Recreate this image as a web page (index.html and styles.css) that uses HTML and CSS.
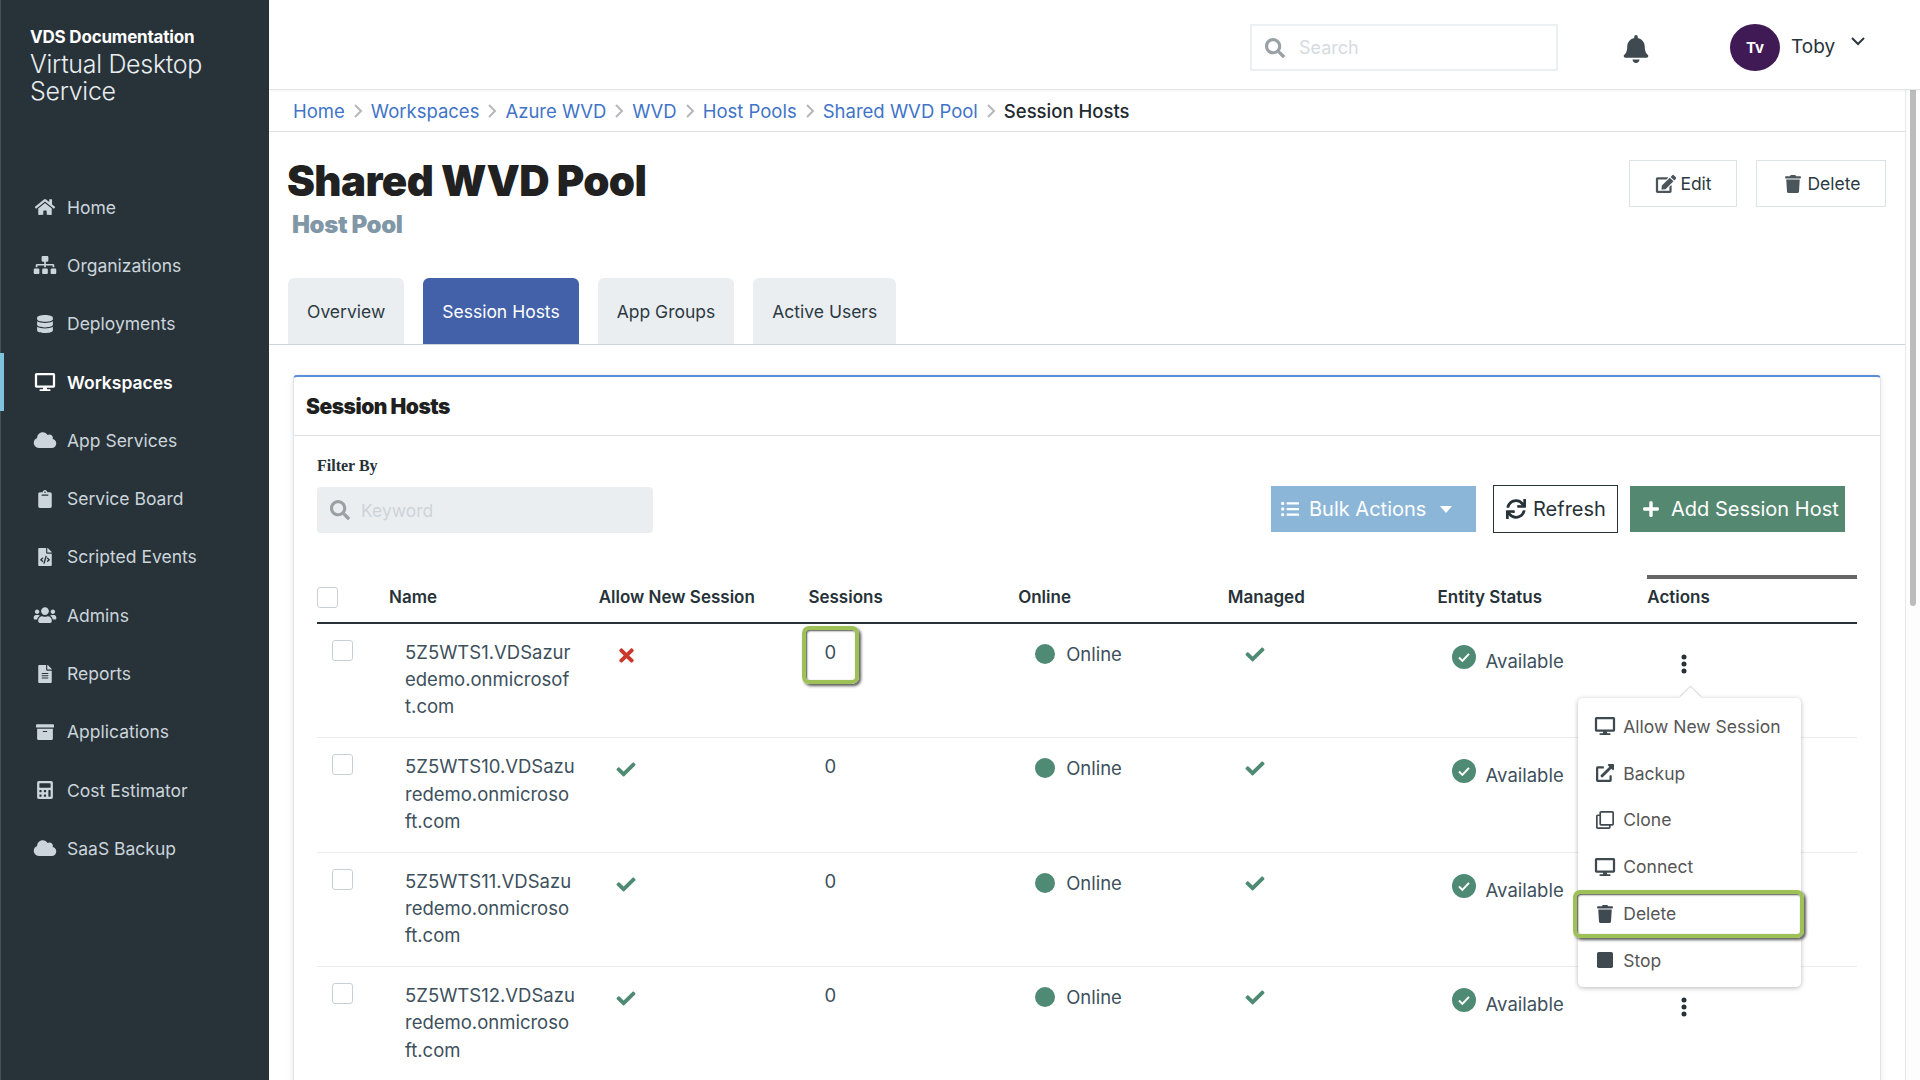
FILE: index.html
```html
<!DOCTYPE html>
<html lang="en">
<head>
<meta charset="utf-8">
<title>Session Hosts</title>
<link rel="stylesheet" href="styles.css">
</head>
<body>
<svg class="sprite" aria-hidden="true">
  <symbol id="i-home" viewBox="0 0 576 512"><path d="M280.37 148.26L96 300.11V464a16 16 0 0 0 16 16l112.06-.29a16 16 0 0 0 15.92-16V368a16 16 0 0 1 16-16h64a16 16 0 0 1 16 16v95.64a16 16 0 0 0 16 16.05L464 480a16 16 0 0 0 16-16V300L295.67 148.26a12.19 12.19 0 0 0-15.3 0zM571.6 251.47L488 182.56V44.05a12 12 0 0 0-12-12h-56a12 12 0 0 0-12 12v72.61L318.47 43a48 48 0 0 0-61 0L4.34 251.47a12 12 0 0 0-1.6 16.9l25.5 31A12 12 0 0 0 45.15 301l235.22-193.74a12.19 12.19 0 0 1 15.3 0L530.9 301a12 12 0 0 0 16.9-1.6l25.5-31a12 12 0 0 0-1.7-16.93z"/></symbol>
  <symbol id="i-sitemap" viewBox="0 0 640 512"><path d="M128 352H32c-17.67 0-32 14.33-32 32v96c0 17.67 14.33 32 32 32h96c17.67 0 32-14.33 32-32v-96c0-17.67-14.33-32-32-32zm-24-80h192v48h48v-48h192v48h48v-57.59c0-21.17-17.23-38.41-38.41-38.41H344v-64h40c17.67 0 32-14.33 32-32V32c0-17.67-14.33-32-32-32H256c-17.67 0-32 14.33-32 32v96c0 17.67 14.33 32 32 32h40v64H94.41C73.23 224 56 241.23 56 262.41V320h48v-48zm264 80h-96c-17.67 0-32 14.33-32 32v96c0 17.67 14.33 32 32 32h96c17.67 0 32-14.33 32-32v-96c0-17.67-14.33-32-32-32zm240 0h-96c-17.67 0-32 14.33-32 32v96c0 17.67 14.33 32 32 32h96c17.67 0 32-14.33 32-32v-96c0-17.67-14.33-32-32-32z"/></symbol>
  <symbol id="i-database" viewBox="0 0 448 512"><path d="M448 73.143v45.714C448 159.143 347.667 192 224 192S0 159.143 0 118.857V73.143C0 32.857 100.333 0 224 0s224 32.857 224 73.143zM448 176v102.857C448 319.143 347.667 352 224 352S0 319.143 0 278.857V176c48.125 33.143 136.208 48.572 224 48.572S399.874 209.143 448 176zm0 160v102.857C448 479.143 347.667 512 224 512S0 479.143 0 438.857V336c48.125 33.143 136.208 48.572 224 48.572S399.874 369.143 448 336z"/></symbol>
  <symbol id="i-desktop" viewBox="0 0 576 512"><path d="M528 0H48C21.5 0 0 21.5 0 48v320c0 26.5 21.5 48 48 48h192l-16 48h-72c-13.3 0-24 10.7-24 24s10.7 24 24 24h272c13.3 0 24-10.7 24-24s-10.7-24-24-24h-72l-16-48h192c26.5 0 48-21.5 48-48V48c0-26.5-21.5-48-48-48zm-16 352H64V64h448v288z"/></symbol>
  <symbol id="i-cloud" viewBox="0 0 640 512"><path d="M537.6 226.6c4.1-10.7 6.4-22.4 6.4-34.6 0-53-43-96-96-96-19.7 0-38.1 6-53.3 16.2C367 64.2 315.3 32 256 32c-88.4 0-160 71.6-160 160 0 2.7.1 5.4.2 8.1C40.2 219.8 0 273.2 0 336c0 79.5 64.5 144 144 144h368c70.7 0 128-57.3 128-128 0-61.9-44-113.6-102.4-125.4z"/></symbol>
  <symbol id="i-clipboard" viewBox="0 0 384 512"><path d="M384 112v352c0 26.51-21.49 48-48 48H48c-26.51 0-48-21.49-48-48V112c0-26.51 21.49-48 48-48h80c0-35.29 28.71-64 64-64s64 28.71 64 64h80c26.51 0 48 21.49 48 48zM192 40c-13.255 0-24 10.745-24 24s10.745 24 24 24 24-10.745 24-24-10.745-24-24-24m96 114v-20a6 6 0 0 0-6-6H102a6 6 0 0 0-6 6v20a6 6 0 0 0 6 6h180a6 6 0 0 0 6-6z"/></symbol>
  <symbol id="i-filecode" viewBox="0 0 384 512"><path d="M384 121.941V128H256V0h6.059c6.365 0 12.47 2.529 16.971 7.029l97.941 97.941A24.005 24.005 0 0 1 384 121.941zM248 160c-13.2 0-24-10.8-24-24V0H24C10.745 0 0 10.745 0 24v464c0 13.255 10.745 24 24 24h336c13.255 0 24-10.745 24-24V160H248zM123.206 400.505a5.4 5.4 0 0 1-7.633.246l-64.866-60.812a5.4 5.4 0 0 1 0-7.879l64.866-60.812a5.4 5.4 0 0 1 7.633.246l19.579 20.885a5.4 5.4 0 0 1-.372 7.747L101.65 336l40.763 35.874a5.4 5.4 0 0 1 .372 7.747l-19.579 20.884zm51.295 50.479l-27.453-7.97a5.402 5.402 0 0 1-3.681-6.692l61.44-211.626a5.402 5.402 0 0 1 6.692-3.681l27.452 7.97a5.4 5.4 0 0 1 3.68 6.692l-61.44 211.626a5.397 5.397 0 0 1-6.69 3.681zm160.792-111.045l-64.866 60.812a5.4 5.4 0 0 1-7.633-.246l-19.58-20.885a5.4 5.4 0 0 1 .372-7.747L284.35 336l-40.763-35.874a5.4 5.4 0 0 1-.372-7.747l19.58-20.885a5.4 5.4 0 0 1 7.633-.246l64.866 60.812a5.4 5.4 0 0 1-.001 7.879z"/></symbol>
  <symbol id="i-users" viewBox="0 0 640 512"><path d="M96 224c35.3 0 64-28.7 64-64s-28.7-64-64-64-64 28.7-64 64 28.7 64 64 64zm448 0c35.3 0 64-28.7 64-64s-28.7-64-64-64-64 28.7-64 64 28.7 64 64 64zm32 32h-64c-17.6 0-33.5 7.1-45.1 18.6 40.3 22.1 68.9 62 75.1 109.4h66c17.7 0 32-14.3 32-32v-32c0-35.3-28.7-64-64-64zm-256 0c61.9 0 112-50.1 112-112S381.9 32 320 32 208 82.1 208 144s50.1 112 112 112zm76.8 32h-8.3c-20.8 10-43.9 16-68.5 16s-47.6-6-68.5-16h-8.3C179.6 288 128 339.6 128 403.2V432c0 26.5 21.5 48 48 48h288c26.5 0 48-21.5 48-48v-28.8c0-63.6-51.6-115.2-115.2-115.2zm-223.7-13.4C161.5 263.1 145.6 256 128 256H64c-35.3 0-64 28.7-64 64v32c0 17.7 14.3 32 32 32h65.9c6.3-47.4 34.9-87.3 75.2-109.4z"/></symbol>
  <symbol id="i-filealt" viewBox="0 0 384 512"><path d="M224 136V0H24C10.7 0 0 10.7 0 24v464c0 13.3 10.7 24 24 24h336c13.3 0 24-10.7 24-24V160H248c-13.2 0-24-10.8-24-24zm64 236c0 6.6-5.4 12-12 12H108c-6.6 0-12-5.4-12-12v-8c0-6.6 5.4-12 12-12h168c6.6 0 12 5.4 12 12v8zm0-64c0 6.6-5.4 12-12 12H108c-6.6 0-12-5.4-12-12v-8c0-6.6 5.4-12 12-12h168c6.6 0 12 5.4 12 12v8zm0-72v8c0 6.6-5.4 12-12 12H108c-6.6 0-12-5.4-12-12v-8c0-6.6 5.4-12 12-12h168c6.6 0 12 5.4 12 12zm96-114.1v6.1H256V0h6.1c6.4 0 12.5 2.5 17 7l97.9 98c4.5 4.5 7 10.6 7 16.9z"/></symbol>
  <symbol id="i-archive" viewBox="0 0 512 512"><path d="M32 448c0 17.7 14.3 32 32 32h384c17.7 0 32-14.3 32-32V160H32v288zm160-212c0-6.6 5.4-12 12-12h104c6.6 0 12 5.4 12 12v8c0 6.6-5.4 12-12 12H204c-6.6 0-12-5.4-12-12v-8zM480 32H32C14.3 32 0 46.3 0 64v48c0 8.8 7.2 16 16 16h480c8.8 0 16-7.2 16-16V64c0-17.7-14.3-32-32-32z"/></symbol>
  <symbol id="i-calc" viewBox="0 0 448 512"><path d="M400 0H48C22.4 0 0 22.4 0 48v416c0 25.6 22.4 48 48 48h352c25.6 0 48-22.4 48-48V48c0-25.6-22.4-48-48-48zM128 435.2c0 6.4-6.4 12.8-12.8 12.8H76.8c-6.4 0-12.8-6.4-12.8-12.8v-38.4c0-6.4 6.4-12.8 12.8-12.8h38.4c6.4 0 12.8 6.4 12.8 12.8v38.4zm0-128c0 6.4-6.4 12.8-12.8 12.8H76.8c-6.4 0-12.8-6.4-12.8-12.8v-38.4c0-6.4 6.4-12.8 12.8-12.8h38.4c6.4 0 12.8 6.4 12.8 12.8v38.4zm128 128c0 6.4-6.4 12.8-12.8 12.8h-38.4c-6.4 0-12.8-6.4-12.8-12.8v-38.4c0-6.4 6.4-12.8 12.8-12.8h38.4c6.4 0 12.8 6.4 12.8 12.8v38.4zm0-128c0 6.4-6.4 12.8-12.8 12.8h-38.4c-6.4 0-12.8-6.4-12.8-12.8v-38.4c0-6.4 6.4-12.8 12.8-12.8h38.4c6.4 0 12.8 6.4 12.8 12.8v38.4zm128 128c0 6.4-6.4 12.8-12.8 12.8h-38.4c-6.4 0-12.8-6.4-12.8-12.8V268.8c0-6.4 6.4-12.8 12.8-12.8h38.4c6.4 0 12.8 6.4 12.8 12.8v166.4zm0-256c0 6.4-6.4 12.8-12.8 12.8H76.8c-6.4 0-12.8-6.4-12.8-12.8V76.8C64 70.4 70.4 64 76.8 64h294.4c6.4 0 12.8 6.4 12.8 12.8v102.4z"/></symbol>
  <symbol id="i-search" viewBox="0 0 512 512"><path d="M505 442.7L405.3 343c-4.5-4.5-10.6-7-17-7H372c27.6-35.3 44-79.7 44-128C416 93.1 322.9 0 208 0S0 93.1 0 208s93.1 208 208 208c48.3 0 92.7-16.4 128-44v16.3c0 6.4 2.5 12.5 7 17l99.7 99.7c9.4 9.4 24.6 9.4 33.9 0l28.3-28.3c9.4-9.4 9.4-24.6.1-34zM208 336c-70.7 0-128-57.2-128-128 0-70.7 57.2-128 128-128 70.7 0 128 57.2 128 128 0 70.7-57.2 128-128 128z"/></symbol>
  <symbol id="i-bell" viewBox="0 0 448 512"><path d="M224 512c35.32 0 63.97-28.65 63.97-64H160.03c0 35.35 28.65 64 63.97 64zm215.39-149.71c-19.32-20.76-55.47-51.99-55.47-154.29 0-77.7-54.48-139.9-127.94-155.16V32c0-17.67-14.32-32-31.98-32s-31.98 14.33-31.98 32v20.84C118.56 68.1 64.08 130.3 64.08 208c0 102.3-36.15 133.53-55.47 154.29-6 6.45-8.66 14.16-8.61 21.71.11 16.4 12.98 32 32.1 32h383.8c19.12 0 32-15.6 32.1-32 .05-7.55-2.61-15.27-8.61-21.71z"/></symbol>
  <symbol id="i-edit" viewBox="0 0 576 512"><path d="M402.6 83.2l90.2 90.2c3.8 3.8 3.8 10 0 13.8L274.4 405.6l-92.8 10.3c-12.4 1.4-22.9-9.1-21.5-21.5l10.3-92.8L388.8 83.2c3.8-3.8 10-3.8 13.8 0zm162-22.9l-48.8-48.8c-15.2-15.2-39.9-15.2-55.2 0l-35.4 35.4c-3.8 3.8-3.8 10 0 13.8l90.2 90.2c3.8 3.8 10 3.8 13.8 0l35.4-35.4c15.2-15.3 15.2-40 0-55.2zM384 346.2V448H64V128h229.8c3.2 0 6.2-1.3 8.5-3.5l40-40c7.6-7.6 2.2-20.5-8.5-20.5H48C21.5 64 0 85.5 0 112v352c0 26.5 21.5 48 48 48h352c26.5 0 48-21.5 48-48V306.2c0-10.7-12.9-16-20.5-8.5l-40 40c-2.2 2.3-3.5 5.3-3.5 8.5z"/></symbol>
  <symbol id="i-trash" viewBox="0 0 448 512"><path d="M432 32H312l-9.4-18.7A24 24 0 0 0 281.1 0H166.8a23.72 23.72 0 0 0-21.4 13.3L136 32H16A16 16 0 0 0 0 48v32a16 16 0 0 0 16 16h416a16 16 0 0 0 16-16V48a16 16 0 0 0-16-16zM53.2 467a48 48 0 0 0 47.9 45h245.8a48 48 0 0 0 47.9-45L416 128H32z"/></symbol>
  <symbol id="i-list" viewBox="0 0 512 512"><path d="M48 48a48 48 0 1 0 48 48 48 48 0 0 0-48-48zm0 160a48 48 0 1 0 48 48 48 48 0 0 0-48-48zm0 160a48 48 0 1 0 48 48 48 48 0 0 0-48-48zm448 16H176a16 16 0 0 0-16 16v32a16 16 0 0 0 16 16h320a16 16 0 0 0 16-16v-32a16 16 0 0 0-16-16zm0-320H176a16 16 0 0 0-16 16v32a16 16 0 0 0 16 16h320a16 16 0 0 0 16-16V80a16 16 0 0 0-16-16zm0 160H176a16 16 0 0 0-16 16v32a16 16 0 0 0 16 16h320a16 16 0 0 0 16-16v-32a16 16 0 0 0-16-16z"/></symbol>
  <symbol id="i-sync" viewBox="0 0 512 512"><path d="M440.65 12.57l4 82.77A247.16 247.16 0 0 0 255.83 8C134.73 8 33.91 94.92 12.29 209.82A12 12 0 0 0 24.09 224h49.05a12 12 0 0 0 11.67-9.26 175.91 175.91 0 0 1 317-56.94l-101.46-4.86a12 12 0 0 0-12.57 12v47.41a12 12 0 0 0 12 12H500a12 12 0 0 0 12-12V12a12 12 0 0 0-12-12h-47.37a12 12 0 0 0-11.98 12.57zM255.83 432a175.61 175.61 0 0 1-146-77.8l101.8 4.87a12 12 0 0 0 12.57-12v-47.4a12 12 0 0 0-12-12H12a12 12 0 0 0-12 12V500a12 12 0 0 0 12 12h47.35a12 12 0 0 0 12-12.6l-4.15-82.57A247.17 247.17 0 0 0 255.83 504c121.11 0 221.93-86.92 243.55-201.82a12 12 0 0 0-11.8-14.18h-49.05a12 12 0 0 0-11.67 9.26A175.86 175.86 0 0 1 255.83 432z"/></symbol>
  <symbol id="i-plus" viewBox="0 0 448 512"><path d="M416 208H272V64c0-17.67-14.33-32-32-32h-32c-17.67 0-32 14.33-32 32v144H32c-17.67 0-32 14.33-32 32v32c0 17.67 14.33 32 32 32h144v144c0 17.67 14.33 32 32 32h32c17.67 0 32-14.33 32-32V304h144c17.67 0 32-14.33 32-32v-32c0-17.67-14.33-32-32-32z"/></symbol>
  <symbol id="i-check" viewBox="0 0 512 512"><path d="M173.898 439.404l-166.4-166.4c-9.997-9.997-9.997-26.206 0-36.204l36.203-36.204c9.997-9.998 26.207-9.998 36.204 0L192 312.69 432.095 72.596c9.997-9.997 26.207-9.997 36.204 0l36.203 36.204c9.997 9.997 9.997 26.206 0 36.204l-294.4 294.401c-9.998 9.997-26.207 9.997-36.204-.001z"/></symbol>
  <symbol id="i-times" viewBox="0 0 352 512"><path d="M242.72 256l100.07-100.07c12.28-12.28 12.28-32.19 0-44.48l-22.24-22.24c-12.28-12.28-32.19-12.28-44.48 0L176 189.28 75.93 89.21c-12.28-12.28-32.19-12.28-44.48 0L9.21 111.45c-12.28 12.28-12.28 32.19 0 44.48L109.28 256 9.21 356.07c-12.28 12.28-12.28 32.19 0 44.48l22.24 22.24c12.28 12.28 32.2 12.28 44.48 0L176 322.72l100.07 100.07c12.28 12.28 32.2 12.28 44.48 0l22.24-22.24c12.28-12.28 12.28-32.19 0-44.48L242.72 256z"/></symbol>
  <symbol id="i-okcircle" viewBox="0 0 24 24"><circle cx="12" cy="12" r="12"/><path d="M7 12.5l3.4 3.4 6.6-7" fill="none" stroke="#fff" stroke-width="2"/></symbol>
  <symbol id="i-link" viewBox="0 0 512 512"><path d="M432 320H400a16 16 0 0 0-16 16V448H64V128H208a16 16 0 0 0 16-16V80a16 16 0 0 0-16-16H48A48 48 0 0 0 0 112V464a48 48 0 0 0 48 48H400a48 48 0 0 0 48-48V336A16 16 0 0 0 432 320ZM488 0h-128c-21.37 0-32.05 25.91-17 41l35.73 35.73L135 320.37a24 24 0 0 0 0 34L157.67 377a24 24 0 0 0 34 0L435.28 133.32 471 169c15 15 41 4.5 41-17V24A24 24 0 0 0 488 0Z"/></symbol>
  <symbol id="i-clone" viewBox="0 0 512 512"><path d="M464 0H144c-26.51 0-48 21.49-48 48v48H48c-26.51 0-48 21.49-48 48v320c0 26.51 21.49 48 48 48h320c26.51 0 48-21.49 48-48v-48h48c26.51 0 48-21.49 48-48V48c0-26.51-21.49-48-48-48zM362 464H54a6 6 0 0 1-6-6V150a6 6 0 0 1 6-6h42v224c0 26.51 21.49 48 48 48h224v42a6 6 0 0 1-6 6zm96-96H150a6 6 0 0 1-6-6V54a6 6 0 0 1 6-6h308a6 6 0 0 1 6 6v308a6 6 0 0 1-6 6z"/></symbol>
  <symbol id="i-stop" viewBox="0 0 448 448"><rect width="448" height="448" rx="48"/></symbol>
  <symbol id="i-kebab" viewBox="0 0 6 20"><circle cx="3" cy="3" r="2.5"/><circle cx="3" cy="10" r="2.5"/><circle cx="3" cy="17" r="2.5"/></symbol>
  <symbol id="i-chev" viewBox="0 0 10 16"><path d="M2 2l6 6-6 6" fill="none" stroke="currentColor" stroke-width="2"/></symbol>
</svg>

<div class="app">
  <aside class="sidebar">
    <div class="brand">
      <div class="brand-top">VDS Documentation</div>
      <div class="brand-name">Virtual Desktop Service</div>
    </div>
    <nav class="nav">
      <a class="nav-item"><span class="nav-icon"><svg class="ico18"><use href="#i-home"/></svg></span>Home</a>
      <a class="nav-item"><span class="nav-icon"><svg class="ico18"><use href="#i-sitemap"/></svg></span>Organizations</a>
      <a class="nav-item"><span class="nav-icon"><svg class="ico18"><use href="#i-database"/></svg></span>Deployments</a>
      <a class="nav-item active"><span class="nav-icon"><svg class="ico18"><use href="#i-desktop"/></svg></span>Workspaces</a>
      <a class="nav-item"><span class="nav-icon"><svg class="ico18"><use href="#i-cloud"/></svg></span>App Services</a>
      <a class="nav-item"><span class="nav-icon"><svg class="ico18"><use href="#i-clipboard"/></svg></span>Service Board</a>
      <a class="nav-item"><span class="nav-icon"><svg class="ico18"><use href="#i-filecode"/></svg></span>Scripted Events</a>
      <a class="nav-item"><span class="nav-icon"><svg class="ico18"><use href="#i-users"/></svg></span>Admins</a>
      <a class="nav-item"><span class="nav-icon"><svg class="ico18"><use href="#i-filealt"/></svg></span>Reports</a>
      <a class="nav-item"><span class="nav-icon"><svg class="ico18"><use href="#i-archive"/></svg></span>Applications</a>
      <a class="nav-item"><span class="nav-icon"><svg class="ico18"><use href="#i-calc"/></svg></span>Cost Estimator</a>
      <a class="nav-item"><span class="nav-icon"><svg class="ico18"><use href="#i-cloud"/></svg></span>SaaS Backup</a>
    </nav>
  </aside>

  <div class="main">
    <header class="topbar">
      <div class="top-search"><svg class="search-ico"><use href="#i-search"/></svg><span>Search</span></div>
      <svg class="bell"><use href="#i-bell"/></svg>
      <div class="avatar">Tv</div>
      <div class="user">Toby</div>
      <svg class="user-chev" viewBox="0 0 14 9"><path d="M1 1l6 6 6-6" fill="none" stroke="#2b3940" stroke-width="2"/></svg>
    </header>

    <div class="below">
      <div class="content">
        <div class="crumbs">
          <a>Home</a><svg class="crumb-sep"><use href="#i-chev"/></svg>
          <a>Workspaces</a><svg class="crumb-sep"><use href="#i-chev"/></svg>
          <a>Azure WVD</a><svg class="crumb-sep"><use href="#i-chev"/></svg>
          <a>WVD</a><svg class="crumb-sep"><use href="#i-chev"/></svg>
          <a>Host Pools</a><svg class="crumb-sep"><use href="#i-chev"/></svg>
          <a>Shared WVD Pool</a><svg class="crumb-sep"><use href="#i-chev"/></svg>
          <span class="crumb-current">Session Hosts</span>
        </div>

        <div class="page-head">
          <div>
            <h1 class="title">Shared WVD Pool</h1>
            <div class="subtitle">Host Pool</div>
          </div>
          <div class="head-actions">
            <button class="ghost-btn"><svg class="ico18"><use href="#i-edit"/></svg>Edit</button>
            <button class="ghost-btn delete-btn"><svg class="ico18"><use href="#i-trash"/></svg>Delete</button>
          </div>
        </div>

        <div class="tabs">
          <div class="tab">Overview</div>
          <div class="tab on">Session Hosts</div>
          <div class="tab">App Groups</div>
          <div class="tab">Active Users</div>
        </div>

        <section class="card">
          <div class="card-head">Session Hosts</div>
          <div class="card-body">
            <div class="filters">
              <div>
                <div class="filter-label">Filter By</div>
                <div class="keyword"><svg class="search-ico"><use href="#i-search"/></svg><span>Keyword</span></div>
              </div>
              <div class="toolbar">
                <button class="btn bulk"><svg class="ico18"><use href="#i-list"/></svg>Bulk Actions<span class="caret"></span></button>
                <button class="btn refresh"><svg class="ico20"><use href="#i-sync"/></svg>Refresh</button>
                <button class="btn add"><svg class="ico18"><use href="#i-plus"/></svg>Add Session Host</button>
              </div>
            </div>

            <div class="grid-row grid-head">
              <div><span class="cb head-cb"></span></div>
              <div>Name</div>
              <div>Allow New Session</div>
              <div>Sessions</div>
              <div>Online</div>
              <div>Managed</div>
              <div>Entity Status</div>
              <div class="actions-head">Actions</div>
            </div>

            <div class="grid-row host">
              <div><span class="cb"></span></div>
              <div class="name">5Z5WTS1.VDSazur<br>edemo.onmicrosof<br>t.com</div>
              <div class="allow"><svg class="x"><use href="#i-times"/></svg></div>
              <div class="sessions first"><span class="zero">0</span><span class="callout session-callout"></span></div>
              <div class="online"><span class="dot"></span>Online</div>
              <div class="managed"><svg class="ok"><use href="#i-check"/></svg></div>
              <div class="status"><svg class="ok-circle"><use href="#i-okcircle"/></svg><span>Available</span></div>
              <div class="kebab-cell">
                <svg class="kebab"><use href="#i-kebab"/></svg>
                <div class="menu">
                  <div class="menu-item"><span class="menu-ico"><svg class="ico18"><use href="#i-desktop"/></svg></span>Allow New Session</div>
                  <div class="menu-item"><span class="menu-ico"><svg class="ico18"><use href="#i-link"/></svg></span>Backup</div>
                  <div class="menu-item"><span class="menu-ico"><svg class="ico18"><use href="#i-clone"/></svg></span>Clone</div>
                  <div class="menu-item"><span class="menu-ico"><svg class="ico18"><use href="#i-desktop"/></svg></span>Connect</div>
                  <div class="menu-item"><span class="menu-ico"><svg class="ico18"><use href="#i-trash"/></svg></span>Delete<span class="callout menu-callout"></span></div>
                  <div class="menu-item"><span class="menu-ico"><svg class="ico16"><use href="#i-stop"/></svg></span>Stop</div>
                </div>
              </div>
            </div>

            <div class="grid-row host">
              <div><span class="cb"></span></div>
              <div class="name">5Z5WTS10.VDSazu<br>redemo.onmicroso<br>ft.com</div>
              <div class="allow"><svg class="ok"><use href="#i-check"/></svg></div>
              <div class="sessions"><span class="zero">0</span></div>
              <div class="online"><span class="dot"></span>Online</div>
              <div class="managed"><svg class="ok"><use href="#i-check"/></svg></div>
              <div class="status"><svg class="ok-circle"><use href="#i-okcircle"/></svg><span>Available</span></div>
              <div class="kebab-cell"></div>
            </div>

            <div class="grid-row host">
              <div><span class="cb"></span></div>
              <div class="name">5Z5WTS11.VDSazu<br>redemo.onmicroso<br>ft.com</div>
              <div class="allow"><svg class="ok"><use href="#i-check"/></svg></div>
              <div class="sessions"><span class="zero">0</span></div>
              <div class="online"><span class="dot"></span>Online</div>
              <div class="managed"><svg class="ok"><use href="#i-check"/></svg></div>
              <div class="status"><svg class="ok-circle"><use href="#i-okcircle"/></svg><span>Available</span></div>
              <div class="kebab-cell"></div>
            </div>

            <div class="grid-row host">
              <div><span class="cb"></span></div>
              <div class="name">5Z5WTS12.VDSazu<br>redemo.onmicroso<br>ft.com</div>
              <div class="allow"><svg class="ok"><use href="#i-check"/></svg></div>
              <div class="sessions"><span class="zero">0</span></div>
              <div class="online"><span class="dot"></span>Online</div>
              <div class="managed"><svg class="ok"><use href="#i-check"/></svg></div>
              <div class="status"><svg class="ok-circle"><use href="#i-okcircle"/></svg><span>Available</span></div>
              <div class="kebab-cell"><svg class="kebab"><use href="#i-kebab"/></svg></div>
            </div>
          </div>
        </section>
      </div>
      <div class="scroll-track"><div class="scroll-thumb"></div></div>
    </div>
  </div>
</div>
</body>
</html>
```

FILE: styles.css
```css
* { box-sizing: border-box; }
html, body { margin: 0; height: 100%; overflow: hidden; }
body { font-family: Inter, "Noto Sans", sans-serif; color: #263238; background: #fff; }
.sprite { position: absolute; width: 0; height: 0; }
svg { fill: currentColor; flex: none; display: block; }
button { font: inherit; cursor: pointer; }
.ico18 { width: 24px; height: 18px; }
.ico20 { width: 20px; height: 20px; }
.ico16 { width: 16px; height: 16px; }

.app { display: flex; height: 1080px; }

.sidebar { width: 269px; flex: none; background: #283239; color: #cbd5db; border-left: 1px solid #46525a; }
.brand { padding: 27px 0 0 29px; height: 178px; }
.brand-top { font-size: 17px; font-weight: 700; color: #fff; line-height: 21px; letter-spacing: -.2px; }
.brand-name { font-size: 25px; line-height: 27px; color: #e8edf0; width: 210px; margin-top: 3px; font-weight: 300; letter-spacing: -.3px; }
.nav { display: flex; flex-direction: column; }
.nav-item { display: flex; align-items: center; height: 58.3px; padding-left: 32px; font-size: 17.5px; gap: 10px; position: relative; }
.nav-item .nav-icon { width: 24px; display: flex; justify-content: center; }
.nav-item.active { color: #fff; font-weight: 600; }
.nav-item.active::before { content: ""; position: absolute; left: -1px; top: 0; bottom: 0; width: 4px; background: #7ec4de; }

.main { flex: 1; min-width: 0; display: flex; flex-direction: column; }
.topbar { height: 90px; flex: none; border-bottom: 1px solid #e4e7e9; display: flex; align-items: flex-start; padding-top: 24px; box-shadow: 0 1px 2px rgba(0,0,0,.05); position: relative; z-index: 2; background: #fff; }
.top-search { width: 308px; height: 47px; margin-left: 981px; border: 2px solid #edf0f2; display: flex; align-items: center; gap: 14px; padding-left: 13px; color: #d5dbdf; font-size: 18px; }
.search-ico { width: 20px; height: 20px; color: #9aa1a5; }
.bell { width: 26px; height: 28px; margin: 11px 0 0 65px; color: #3e4a50; }
.avatar { width: 50px; height: 47px; border-radius: 50%; background: #3f1a55; color: #fff; font-size: 15px; font-weight: 700; display: flex; align-items: center; justify-content: center; margin-left: 81px; }
.user { font-size: 19px; margin: 11px 0 0 11px; line-height: 24px; }
.user-chev { width: 14px; height: 9px; margin: 13px 0 0 16px; }

.below { flex: 1; min-height: 0; display: flex; }
.content { flex: 1; min-width: 0; overflow: hidden; }
.scroll-track { width: 15px; flex: none; border-left: 1px solid #e6e8ea; padding: 0 4px 0 4px; background: #fdfdfd; }
.scroll-thumb { height: 516px; background: #bcbcbc; border-radius: 0 0 4px 4px; }

.crumbs { height: 42px; border-bottom: 1px solid #dfe3e6; padding-left: 24px; display: flex; align-items: center; font-size: 18.5px; color: #3f74c8; }
.crumb-sep { width: 10px; height: 16px; margin: 0 8px; color: #b4b8ba; }
.crumb-current { color: #1f2a30; font-weight: 500; }

.page-head { height: 146px; display: flex; justify-content: space-between; padding-left: 18px; }
.title { margin: 23px 0 0; font-size: 42px; line-height: 52px; font-weight: 900; color: #212121; letter-spacing: -.6px; }
.subtitle { margin: 3px 0 0 5px; font-size: 24px; line-height: 30px; font-weight: 900; color: #7f97a6; letter-spacing: -.4px; }
.head-actions { display: flex; gap: 19px; margin: 28px 19px 0 0; align-items: flex-start; }
.ghost-btn { height: 47px; width: 108px; background: #fff; border: 1px solid #dde2e5; color: #2b3a42; font-size: 17.5px; display: flex; align-items: center; justify-content: center; gap: 2px; }
.ghost-btn svg { color: #4b565c; }
.delete-btn { width: 130px; }

.tabs { display: flex; gap: 19px; padding-left: 19px; border-bottom: 1px solid #ccd6dc; height: 67px; }
.tab { height: 66px; padding: 0 19px; background: #ebeef1; border-radius: 6px 6px 0 0; display: flex; align-items: center; font-size: 17.5px; color: #2b3a42; }
.tab.on { background: #4361a8; color: #fff; }

.card { margin: 30px 24px 0; border: 1px solid #e1e5e8; border-top: 2px solid #5b8dd9; border-radius: 4px 4px 0 0; box-shadow: 0 1px 6px rgba(0,0,0,.1); height: 740px; background: #fff; }
.card-head { height: 59px; border-bottom: 1px solid #dfe3e6; padding-left: 12px; display: flex; align-items: center; font-size: 21px; font-weight: 900; color: #1f1f1f; letter-spacing: -.5px; }
.card-body { padding: 0 23px; }

.filters { display: flex; justify-content: space-between; align-items: flex-end; height: 97px; }
.filter-label { font-family: "Liberation Serif", serif; font-weight: 700; font-size: 16px; line-height: 20px; margin-bottom: 11px; }
.keyword { width: 336px; height: 46px; background: #ebeef1; border-radius: 4px; display: flex; align-items: center; gap: 11px; padding-left: 13px; color: #cdd4d9; font-size: 17.5px; }
.toolbar { display: flex; align-items: center; margin-right: 12px; margin-bottom: 0; }
.btn { height: 46px; border: 0; font-size: 20px; display: flex; align-items: center; color: #fff; }
.bulk { width: 205px; background: #8cb6d8; padding-left: 7px; }
.bulk .ico18 { margin-right: 7px; }
.caret { width: 0; height: 0; border: 6px solid transparent; border-top: 7px solid #fff; border-bottom: 0; margin-left: 14px; }
.refresh { width: 125px; height: 48px; background: #fff; color: #263238; border: 1px solid #263238; margin-left: 17px; padding-left: 12px; gap: 7px; }
.add { width: 215px; background: #558871; margin-left: 12px; padding-left: 9px; gap: 8px; }

.grid-row { display: grid; grid-template-columns: 72px repeat(7, 1fr); }
.grid-head { height: 91px; border-bottom: 2px solid #263238; font-size: 17px; font-weight: 600; color: #263238; }
.grid-head > div { padding-top: 52px; line-height: 24px; }
.grid-head > .actions-head { border-top: 4px solid #666; margin-top: 42px; padding-top: 6px; }
.cb { display: block; width: 21px; height: 21px; border: 1px solid #c9d0d4; border-radius: 3px; background: #fff; }
.head-cb { margin-top: 2px; }

.host { height: 114.4px; border-bottom: 1px solid #e9ecee; font-size: 18.5px; color: #3d505c; }
.host > div { position: relative; }
.host .cb { margin: 16px 0 0 15px; }
.name { padding: 15px 0 0 16px; line-height: 27.2px; white-space: nowrap; }
.allow { padding: 21px 0 0 16px; }
.x { width: 19px; height: 21px; color: #c9392c; margin-left: 2px; }
.ok { width: 22px; height: 19px; color: #4e8a74; margin-top: 1px; }
.sessions { padding: 15px 0 0 16px; line-height: 27px; }
.zero { display: inline-block; }
.callout { position: absolute; border: 4px solid #9dc156; border-radius: 7px; box-shadow: inset 1px 1px 2px #4c4c4c, 2px 2px 3px #5a5a5a; }
.session-callout { left: -6px; top: 2px; width: 57px; height: 58px; }
.online { display: flex; align-items: flex-start; padding: 20px 0 0 17px; gap: 11px; line-height: 21px; }
.dot { width: 20px; height: 20px; border-radius: 50%; background: #4e8a74; }
.managed { padding: 20px 0 0 16px; }
.status { display: flex; align-items: flex-start; padding: 21px 0 0 14px; gap: 10px; }
.ok-circle { width: 24px; height: 24px; color: #4e8a74; }
.status span { margin-top: 4px; line-height: 24px; }
.kebab-cell { padding: 30px 0 0 34px; }
.kebab { width: 6px; height: 20px; color: #263238; }

.menu { position: absolute; left: -69px; top: 74px; width: 223px; height: 289px; background: #fff; border-radius: 5px; box-shadow: 0 1px 5px rgba(0,0,0,.28); padding: 5px 0; z-index: 3; }
.menu::before { content: ""; position: absolute; left: 105px; top: -8px; width: 15px; height: 15px; background: #fff; transform: rotate(45deg); box-shadow: -1px -1px 1px rgba(0,0,0,.15); }
.menu-item { position: relative; height: 46.8px; display: flex; align-items: center; padding-left: 15px; font-size: 17.5px; color: #565656; gap: 6px; }
.menu-ico { width: 24px; display: flex; justify-content: center; color: #3e4a50; }
.menu-callout { left: -5px; right: -3px; top: 0; bottom: -1px; }
```
